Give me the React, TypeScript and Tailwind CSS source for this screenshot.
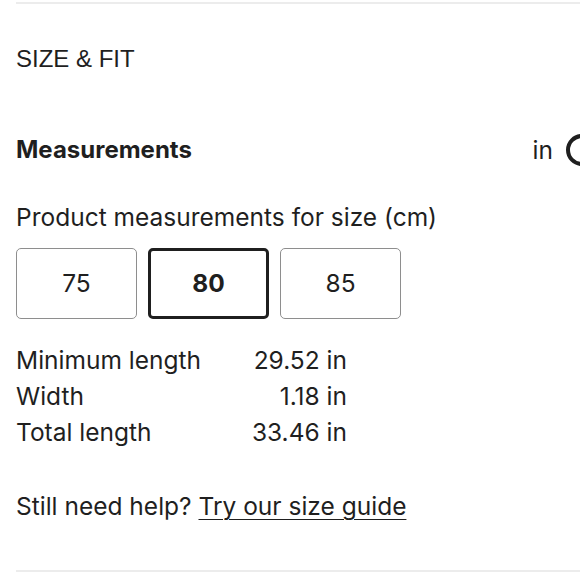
const SIZES = ['75', '80', '85']

const ROWS = [
  { label: 'Minimum length', value: '29.52 in' },
  { label: 'Width', value: '1.18 in' },
  { label: 'Total length', value: '33.46 in' },
]

export default function App() {
  const selected = '80'

  return (
    <div className="w-[580px] h-[580px] overflow-hidden bg-white text-[#1f1f1f]">
      <div className="w-[660px] pl-4 pt-[2px]" style={{ fontFamily: 'Inter, "Noto Sans", sans-serif' }}>
        <div className="border-t-2 border-[#ececec]">
          {/* Header */}
          <h2
            className="pt-[40px] text-[24px] leading-[30px]"
            style={{ fontFamily: '"Liberation Sans", Arial, sans-serif' }}
          >
            SIZE &amp; FIT
          </h2>

          {/* Measurements + unit toggle */}
          <div className="mt-[60px] flex items-center justify-between w-[602px]">
            <h3 className="text-[24px] font-bold leading-[30px]">Measurements</h3>
            <div className="flex items-center gap-[13px]">
              <span className="text-[24.5px] leading-[30px]">in</span>
              <div className="w-[52px] h-[32px] rounded-full border-[4px] border-[#1f1f1f] shrink-0" />
            </div>
          </div>

          <p className="mt-[36px] text-[24.5px] leading-[30px]">Product measurements for size (cm)</p>

          {/* Size buttons */}
          <div className="mt-[16px] flex gap-[11px]">
            {SIZES.map(s => (
              <button
                key={s}
                className={
                  s === selected
                    ? 'w-[121px] h-[71px] rounded-[5px] border-[3px] border-[#1f1f1f] text-[24.5px] font-bold'
                    : 'w-[121px] h-[71px] rounded-[5px] border border-[#8e8e8e] text-[24.5px]'
                }
              >
                {s}
              </button>
            ))}
          </div>

          {/* Measurement table */}
          <div className="mt-[23px] grid grid-cols-[auto_auto] w-[331px] text-[24.5px] leading-[36px]">
            {ROWS.map(r => (
              <div key={r.label} className="contents">
                <span>{r.label}</span>
                <span className="text-right">{r.value}</span>
              </div>
            ))}
          </div>

          <p className="mt-[41px] text-[24.5px] leading-[30px]">
            Still need help?{' '}
            <a href="#" className="underline underline-offset-[4px] decoration-1">
              Try our size guide
            </a>
          </p>

          <div className="mt-[49px] border-t-2 border-[#ececec]" />
        </div>
      </div>
    </div>
  )
}
